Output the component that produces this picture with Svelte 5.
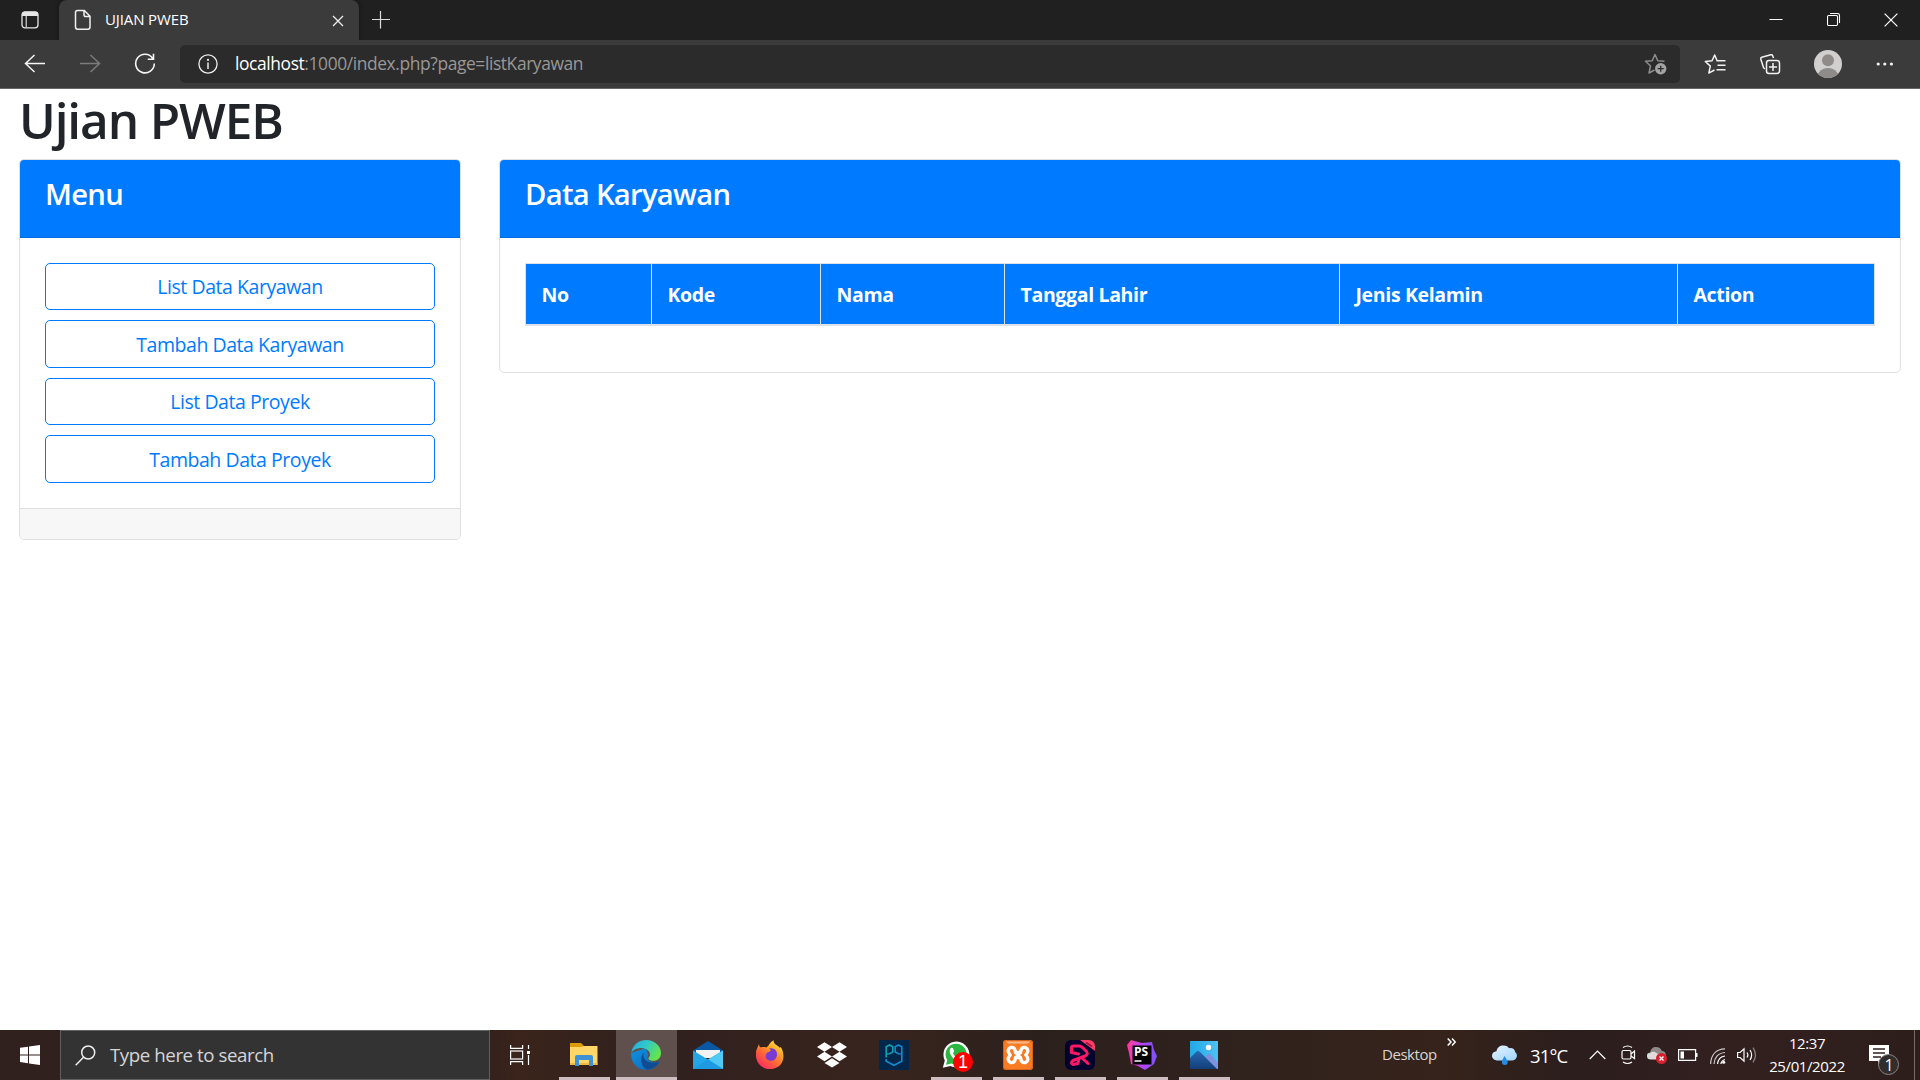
<script>
  const menu = ['List Data Karyawan', 'Tambah Data Karyawan', 'List Data Proyek', 'Tambah Data Proyek'];
  const columns = ['No', 'Kode', 'Nama', 'Tanggal Lahir', 'Jenis Kelamin', 'Action'];
</script>

<div class="screen">
  <div class="tabstrip">
    <div class="tabaction">
      <svg width="20" height="20" viewBox="0 0 20 20"><rect x="2" y="1.8" width="16" height="16" rx="3" fill="none" stroke="#e6e6e6" stroke-width="1.3" /><path d="M2 6V4.5Q2 1.8 4.7 1.8h10.6Q18 1.8 18 4.5V6z" fill="#e6e6e6" /><path d="M6.2 5v12.5" stroke="#e6e6e6" stroke-width="1.1" /></svg>
    </div>
    <div class="tab">
      <svg class="page" width="18" height="22" viewBox="0 0 18 22" fill="none" stroke="#f0f0f0" stroke-width="1.5"><path d="M3.5 1.5h6.8l5.7 5.7v10.8q0 2.2-2.2 2.2H3.7q-2.2 0-2.2-2.2V3.6q0-2.1 2-2.1zM10 1.8v3.9q0 1.8 1.8 1.8h4" /></svg>
      <span class="tabtitle">UJIAN PWEB</span>
      <svg class="tabx" width="12" height="12" viewBox="0 0 12 12" stroke="#eee" stroke-width="1.3"><path d="M1 1l10 10M11 1L1 11" /></svg>
    </div>
    <svg class="plus" width="18" height="18" viewBox="0 0 18 18" stroke="#ddd" stroke-width="1.2"><path d="M0 8.5h18M8.500 0v17.500" /></svg>
    <div class="winbtns">
      <svg width="14" height="14" viewBox="0 0 14 14"><path d="M.5 6.500h13" stroke="#fff" /></svg>
      <svg width="14" height="14" viewBox="0 0 14 14" fill="none" stroke="#fff" stroke-width="1.1"><rect x=".5" y="2.500" width="10" height="10" rx="1.2" /><path d="M3 .5h7.500q2 0 2 2v7.500" /></svg>
      <svg width="14" height="14" viewBox="0 0 14 14"><path d="M.6.6l12.800 12.800M13.400.6L.6 13.400" stroke="#fff" stroke-width="1.200" /></svg>
    </div>
  </div>

  <div class="toolbar">
    <div class="nav">
      <svg width="22" height="20" viewBox="0 0 22 20" fill="none" stroke="#f5f5f5" stroke-width="1.500"><path d="M21 9.500H1.500M10.500 1L1.500 9.500l9 8.500" /></svg>
      <svg width="22" height="20" viewBox="0 0 22 20" fill="none" stroke="#7b7b7b" stroke-width="1.500"><path d="M1 9.500h19.500M11.500 1l9 8.500-9 8.500" /></svg>
      <svg width="22" height="22" viewBox="0 0 22 22" fill="none" stroke="#f5f5f5" stroke-width="1.600"><path d="M18.800 5.500A9.300 9.300 0 1 0 20.300 10.500M19.500.700v5.600h-5.800" /></svg>
    </div>
    <div class="address">
      <svg class="info" width="20" height="20" viewBox="0 0 20 20"><circle cx="10" cy="10" r="9.100" fill="none" stroke="#eee" stroke-width="1.300" /><path d="M10 8.500v6.500" stroke="#eee" stroke-width="1.500" /><circle cx="10" cy="5.900" r="1.100" fill="#eee" /></svg>
      <span class="url"><b>localhost</b>:1000/index.php?page=listKaryawan</span>
      <svg class="fav" width="24" height="24" viewBox="0 0 24 24"><path d="M20.500 9.300l-6.700-.6L11 2.500 8.200 8.700l-6.700.6 5 4.700-1.500 7 5.500-3" fill="none" stroke="#8c8c8c" stroke-width="1.500" stroke-linejoin="round" /><circle cx="16.700" cy="16.700" r="5.700" fill="#a2a2a2" /><path d="M16.700 13.700v6M13.700 16.700h6" stroke="#2b2b2b" stroke-width="1.300" /></svg>
    </div>
    <div class="tools">
      <svg width="22" height="22" viewBox="0 0 22 22" fill="none" stroke="#f2f2f2" stroke-width="1.500" stroke-linejoin="round"><path d="M13 7.500L10.700 2 8 7.700l-6.700.8 5 4.600-1.500 7L10.500 17M12.500 7.700h9M13.500 12.200h8M12.500 16.700h9" /></svg>
      <svg width="22" height="22" viewBox="0 0 22 22" fill="none" stroke="#f2f2f2" stroke-width="1.500"><rect x="7.500" y="7.500" width="13" height="13" rx="2.500" /><path d="M14 10v8M10 14h8M14.500 5l-.8-2.300q-.5-1.300-2-.9L2.800 4.300q-1.500.5-1 2l2.700 8.200q.4 1 1.500 1.300" /></svg>
      <svg width="28" height="28" viewBox="0 0 28 28"><defs><clipPath id="avatar"><circle cx="14" cy="14" r="14" /></clipPath></defs><g clip-path="url(#avatar)"><path d="M0 0h28v28H0z" fill="#d2d0ce" /><circle cx="14" cy="10.300" r="6" fill="#8f8b88" /><ellipse cx="14" cy="25.500" rx="10" ry="7.500" fill="#8f8b88" /></g></svg>
      <svg width="18" height="6" viewBox="0 0 18 6" fill="#f2f2f2"><circle cx="2.200" cy="3" r="1.600" /><circle cx="8.800" cy="3" r="1.600" /><circle cx="15.400" cy="3" r="1.600" /></svg>
    </div>
  </div>

  <main>
    <h1><span>Ujian PWEB</span></h1>
    <div class="cards">
      <section class="card side">
        <header>Menu</header>
        <div class="buttons">
          {#each menu as item}
            <button>{item}</button>
          {/each}
        </div>
        <footer></footer>
      </section>
      <section class="card data">
        <header>Data Karyawan</header>
        <div class="table">
          {#each columns as col}
            <div class="th">{col}</div>
          {/each}
        </div>
      </section>
    </div>
  </main>

  <div class="taskbar">
    <div class="start">
      <svg width="20" height="20" viewBox="0 0 20 20" fill="#fff"><path d="M0 2.800L8 1.700v7.700H0zM9 1.500L20 0v9.400H9zM0 10.400h8v7.800L0 17.100zM9 10.400h11V20L9 18.400z" /></svg>
    </div>
    <div class="search">
      <svg width="21" height="21" viewBox="0 0 21 21" fill="none" stroke="#eee" stroke-width="1.500"><circle cx="13.200" cy="7.500" r="6.500" /><path d="M8.500 12.200L.7 20.200" /></svg>
      <span>Type here to search</span>
    </div>
    <div class="taskview">
      <svg width="21" height="20" viewBox="0 0 21 20" fill="none" stroke="#fff" stroke-width="1.200"><path d="M.6 0v3.400h12V0M.6 20v-3.400h12V20M18.500 0v4M18.500 10v10" /><rect x=".6" y="6" width="12" height="8" /><path d="M17 6h3v3h-3z" fill="#fff" stroke="none" /></svg>
    </div>
    <div class="apps">
      <div class="app open">
        <svg width="30" height="30" viewBox="0 0 30 30"><path d="M1 3h11l3 3v6H1z" fill="#dd9b08" /><path d="M1 7h11l3-1h13.500v19H1z" fill="#ffd667" /><path d="M1 23h27.500v2H1z" fill="#eeb93c" /><path d="M6 26V17q0-2 2-2h14q2 0 2 2v9h-4v-6H10v6z" fill="#3e91d4" /></svg>
      </div>
      <div class="app open active">
        <svg width="30" height="30" viewBox="0 0 30 30"><defs><linearGradient id="edgeTop" x1="0" x2="1" y1="0" y2=".5"><stop stop-color="#23a7e5" /><stop offset=".5" stop-color="#31c9c9" /><stop offset="1" stop-color="#65e34d" /></linearGradient><linearGradient id="edgeLow" x1="0" x2="1" y2="1"><stop stop-color="#1390df" /><stop offset="1" stop-color="#0869bd" /></linearGradient></defs><path d="M.2 13C-.5 22 6 30 15 30c5.500 0 10.500-3 13.200-7.500.4-.8-.3-1.300-1-.9-3.500 1.500-7.200.9-9.200-1-2-2-2-3.500-.7-5.500L15 8z" fill="url(#edgeLow)" /><path d="M.2 13C1.500 5.300 7.500 0 15 0c8.500 0 15 6.100 15 13 0 5-3.600 7.800-7.600 7.800-3.300 0-5-1.300-5-2.400 0-.9 1.600-1.500 1.600-4C19 11.300 15.500 8 10.500 8 5.500 8 1.600 10.300.2 13z" fill="url(#edgeTop)" /><path d="M13.500 12.500C9 14.500 8.500 27.500 17 29.700c4.700-.7 8.700-3.400 11.200-7.200.4-.8-.3-1.300-1-.9-6.200 2.600-13.200.4-14.700-4.600-.5-2 0-3.500 1-4.500z" fill="#104c92" /></svg>
      </div>
      <div class="app">
        <svg width="30" height="30" viewBox="0 0 30 30"><path d="M0 10.500L15 1l15 9.500V16H0z" fill="#0a57a4" /><path d="M3 10h24v8H3z" fill="#f2f2f2" /><path d="M0 10.500V29h30V10.500L15 19.500z" fill="#21a6e8" /><path d="M30 10.500V29L15 19.500z" fill="#51c9f5" /><path d="M0 29l15-9.500L30 29z" fill="#1d9be2" /></svg>
      </div>
      <div class="app">
        <svg width="30" height="30" viewBox="0 0 30 30"><defs><linearGradient id="fox" x1="1" y1="0" x2=".3" y2="1"><stop stop-color="#fff44f" /><stop offset=".45" stop-color="#ff9a20" /><stop offset="1" stop-color="#ff2462" /></linearGradient><linearGradient id="foxBottom" x1="1" y1="0" x2="0" y2="1"><stop stop-color="#ffc42e" /><stop offset=".5" stop-color="#ff6436" /><stop offset="1" stop-color="#f31d70" /></linearGradient></defs><path d="M4 4c0 2 .7 3 2 3.500 2-.7 4-.5 5 0C14 6.800 14 2.500 18.500.3c0 4.700 4.500 5 6.500 7.700l.5-1.200C31 14 29.500 29 15 29 6 29 .5 22 1 14c.2-4.500 1.300-6.500 2-7.500z" fill="url(#fox)" /><path d="M1.200 11c2-2.500 6-3.700 9.500-2.500 2.700 1 4.200 1 5.300 1.500-2 2-4.500 2-4.700 3.500-1.800 2.700-.5 7.200 4.500 7.500 4 .2 7.500-3 6.500-8 3 2 5 0 5.500-1C28 22 23 29 15 29S.5 22 1.200 11z" fill="url(#foxBottom)" opacity=".85" /><path d="M14 8.500c5-1.500 8.500 2 8 6.500-.4 4-3.300 6-6.300 5.700-4-.2-6.200-3.200-4.400-7 .5-1.500 3-1.500 4.700-3.500z" fill="#793bd1" /></svg>
      </div>
      <div class="app">
        <svg width="30" height="30" viewBox="0 0 30 30" fill="#fff"><path d="M7.500 2.200L15 7l-7.500 4.800L0 7zM22.500 2.200L30 7l-7.500 4.800L15 7zM7.500 11.800l7.500 4.700-7.500 4.800L0 16.500zM22.500 11.800l7.500 4.700-7.500 4.800-7.500-4.800zM15 18.200l7.500 4.700L15 27.600l-7.500-4.700z" /></svg>
      </div>
      <div class="app">
        <svg width="30" height="30" viewBox="0 0 30 30"><path d="M0 0h30v30H0z" fill="#03264b" /><g fill="none" stroke-width="1.600"><path d="M7.200 17.500V6.700L10.500 5l3.300 1.700V12l-3.300 1.700-3.300.3" stroke="#14a0b0" /><path d="M22.800 14l-3.300-.3-3.300-1.700V6.700L19.500 5l3.300 1.700v14.500L15 25.300l-7.800-4.100V19" stroke="#1688cf" /></g></svg>
      </div>
      <div class="app open">
        <svg width="30" height="30" viewBox="0 0 30 30"><path d="M1.800 27.800l2-7.400A13 13 0 1 1 9.300 26z" fill="#fff" /><path d="M5 24.700l1.300-4.800A10.500 10.500 0 1 1 10.300 23.500z" fill="#2cb742" /><path d="M9.400 8.500q1.200-1.500 2.400-.4l1.300 3q.2.800-1.300 2.100 1.600 3.400 5.200 4.800l1.700-2 3.500 1.700q.6 3.600-3.400 4.100C13.500 21.800 6.500 13 9.400 8.500z" fill="#fff" /></svg>
        <span class="count">1</span>
      </div>
      <div class="app open">
        <svg width="30" height="30" viewBox="0 0 30 30"><rect width="30" height="30" rx="3" fill="#fa7b22" /><path d="M3 1.500h24l-2 2H5z" fill="#fcb98a" /><rect x=".5" y=".5" width="29" height="29" rx="3" fill="none" stroke="#c9601c" stroke-width=".8" /><path d="M7.500 7.500Q12 6.500 12.500 12.500h5q.5-6 5-5 4.500 2.500.3 7.500 4.200 5-.3 7.500-4.500 1-5-5h-5q-.5 6-5 5-4.500-2.500-.3-7.500-4.200-5 .3-7.500z" fill="none" stroke="#fff" stroke-width="3.400" stroke-linejoin="round" /><path d="M12.500 15h5" stroke="#fff" stroke-width="4" /></svg>
      </div>
      <div class="app open">
        <svg width="30" height="30" viewBox="0 0 30 30"><defs><clipPath id="recClip"><rect width="30" height="30" rx="6" /></clipPath></defs><g clip-path="url(#recClip)"><path d="M0 0h30v30H0z" fill="#03022e" /><path d="M15 0h15v11z" fill="#ff3e68" /></g><path d="M21 2.500l6 4" stroke="#a41545" stroke-width="2" /><path d="M6.500 12.500V8q0-2.500 2.500-2h5q2 0 3.500 1.500l4 4q2 3-1.500 4.500L8 20.500q-3 2.500 0 4l5-1 1-5M17 18l6 5.500M6.500 12.500l7 1.500" fill="none" stroke="#ff1767" stroke-width="3" stroke-linejoin="round" stroke-linecap="round" /></svg>
      </div>
      <div class="app open">
        <svg width="30" height="30" viewBox="0 0 30 30"><defs><linearGradient id="storm"><stop stop-color="#ff3b94" /><stop offset=".5" stop-color="#b844f4" /><stop offset="1" stop-color="#7855fa" /></linearGradient></defs><path d="M4 0l11 3 10-1 2 8 3 6-3 8-9 6-7-4-7-2L2 13 0 5z" fill="url(#storm)" /><path d="M5.500 5.500h19v19h-19z" fill="#050505" /><path d="M7.500 21h7" stroke="#fff" stroke-width="1.500" /></svg>
        <span class="ps">PS</span>
      </div>
      <div class="app open">
        <svg width="28" height="28" viewBox="0 0 28 28"><defs><linearGradient id="sky" x2="1"><stop stop-color="#20a9e8" /><stop offset="1" stop-color="#4fc0f3" /></linearGradient><linearGradient id="hill" x2="0" y2="1"><stop stop-color="#2767af" /><stop offset="1" stop-color="#123f7b" /></linearGradient></defs><path d="M0 0h28v28H0z" fill="url(#sky)" /><path d="M14 18l3-4q2-2 4 0l7 8v6H14z" fill="#7d91dc" /><path d="M0 17l6-6q2-2 4 0l17 17H0z" fill="url(#hill)" /><circle cx="18.500" cy="6.500" r="2.700" fill="#fff" /></svg>
      </div>
    </div>
    <div class="tray">
      <span class="desktop">Desktop</span>
      <svg class="more" width="9" height="8" viewBox="0 0 9 8" fill="none" stroke="#fff" stroke-width="1.500"><path d="M.7.500L4 4 .7 7.500M5 .5L8.300 4 5 7.500" /></svg>
      <svg class="weather" width="25" height="20" viewBox="0 0 25 20"><defs><linearGradient id="cloud" x2="1" y2="1"><stop stop-color="#e8f6ff" /><stop offset="1" stop-color="#9fd3fc" /></linearGradient></defs><path d="M6 15.500C2 15.500 0 13 0 10.700 0 8 2 6.500 4.500 6.200 5 2.500 8 .5 11.500.5c3 0 4.700 1.300 5.500 2.700 3-.7 6 1 6.300 4 3 2 1.700 8.300-3 8.300z" fill="url(#cloud)" /><path d="M12.500 11c2 3 3.200 4.700 3.200 6a2.900 2.900 0 0 1-5.800 0c0-1.500 1-3 2.600-6z" fill="#268ce3" /></svg>
      <span class="temp">31°C</span>
      <svg class="chev" width="17" height="10" viewBox="0 0 17 10" fill="none" stroke="#fff" stroke-width="1.200"><path d="M.7 9l7.800-8 7.800 8" /></svg>
      <svg class="meet" width="15" height="20" viewBox="0 0 15 20" fill="none" stroke="#fff" stroke-width="1.200"><rect x="1" y="5.500" width="9" height="8.500" rx="1.500" /><path d="M10 9l3.500-3v7.500L10 11M2 2.500Q6.500-.5 11 2.500M2 17Q6.500 20 11 17" /></svg>
      <svg class="drive" width="21" height="20" viewBox="0 0 21 20"><path d="M4 14Q0 14 0 10.500 0 7.500 3.200 7.500C3.500 4 6 2 9 2c3 0 5 1.500 5.800 4 3 0 4 2 4 4 0 3-2 4-4 4z" fill="#8f8a89" /><path d="M4 14.500Q0 14.500 0 11 0 8 3.200 8 5 6 8 7l6 4v3.500z" fill="#dedbda" /><circle cx="14.500" cy="13.500" r="5.500" fill="#d81f30" /><path d="M12.500 11.500l4 4M16.500 11.500l-4 4" stroke="#fff" stroke-width="1.300" /></svg>
      <svg class="battery" width="20" height="12" viewBox="0 0 20 12"><path d="M.6.6h17v10.800H.6z" fill="none" stroke="#fff" stroke-width="1.200" /><path d="M18 4h1.500v4H18zM2.500 2.500H6v7H2.500z" fill="#fff" /></svg>
      <svg class="wifi" width="16" height="16" viewBox="0 0 16 16" fill="none" stroke-width="1.200"><path d="M.6 16C1 7 6 1 15 .8M4 16c.2-6 4-11 11-11.500" stroke="#d0cccb" /><path d="M7.500 16c.5-4 3-7.500 7.500-8M10.800 16c.5-2.300 2-4 4.200-4.500" stroke="#fff" /><circle cx="13.700" cy="14.300" r="1.500" fill="#fff" /></svg>
      <svg class="speaker" width="20" height="16" viewBox="0 0 20 16" fill="none" stroke="#fff" stroke-width="1.200"><path d="M.6 5.500h2.500L7 1.800v12.400L3.100 10.500H.6zM10 5.500q1.800 2.500 0 5M13 3q3.300 5 0 10" /><path d="M16 .7q5 7.300 0 14.600" stroke="#8c8583" /></svg>
      <div class="clock"><span>12:37</span><span>25/01/2022</span></div>
      <div class="notif">
        <svg width="32" height="32" viewBox="0 0 32 32"><path d="M0 0h20v16h-7l-4 4v-4H0z" fill="#fff" /><path d="M4 4h12M4 8h12M4 12h8" stroke="#2c211f" stroke-width="1.300" /><circle cx="19.500" cy="19.500" r="10" fill="#302d2c" stroke="#8b8583" /></svg>
        <span>1</span>
      </div>
      <i class="peek"></i>
    </div>
  </div>
</div>

<style>
  :global(body) { background: #fff; overflow: hidden; }
  .screen { width: 1920px; height: 1080px; display: flex; flex-direction: column; font-family: 'Open Sans', 'Noto Sans', sans-serif; color: #212529; }
  svg { display: block; flex: none; }
  span { white-space: nowrap; }

  .tabstrip { height: 40px; background: #202020; display: flex; align-items: center; flex: none; }
  .tabaction { width: 59px; padding-left: 20px; box-sizing: border-box; }
  .tab { width: 300px; height: 40px; box-sizing: border-box; padding: 0 15px 0 15px; background: #3b3b3b; border-radius: 8px 8px 0 0; display: flex; align-items: center; box-shadow: 0 0 4px #111; }
  .tabtitle { color: #fff; font-size: 15px; letter-spacing: -.12px; margin-left: 13px; line-height: 20px; padding-bottom: 2px; }
  .tabx { margin-left: auto; margin-top: 1px; }
  .plus { margin-left: 13px; }
  .winbtns { margin-left: auto; display: flex; gap: 43.500px; padding-right: 22px; }

  .toolbar { height: 49px; box-sizing: border-box; border-bottom: 1px solid #666; background: #3b3b3b; display: flex; align-items: center; flex: none; }
  .nav { width: 180px; box-sizing: border-box; padding-left: 24px; display: flex; gap: 33px; align-items: center; }
  .address { width: 1500px; height: 38px; box-sizing: border-box; border-radius: 5px; background: #2b2b2b; display: flex; align-items: center; padding: 0 12px 0 17.500px; }
  .info { margin-bottom: 1px; }
  .url { color: #989898; font-size: 17.400px; letter-spacing: -.390px; margin-left: 17.500px; padding-bottom: 2px; }
  .url b { color: #fff; font-weight: 400; }
  .fav { margin-left: auto; }
  .tools { display: flex; align-items: center; padding-left: 24px; }
  .tools svg:nth-child(2) { margin-left: 33px; }
  .tools svg:nth-child(3) { margin-left: 33px; }
  .tools svg:nth-child(4) { margin-left: 34px; }

  main { flex: 1; padding: 0 19px; }
  h1 { margin: 0; height: 70px; font-size: 49.500px; line-height: 63px; font-weight: 600; letter-spacing: -1.100px; }
  .cards { display: flex; gap: 38px; align-items: flex-start; }
  .card { box-sizing: border-box; border: 1px solid #dfdfdf; border-radius: 5px; overflow: hidden; }
  .side { width: 442px; height: 381px; }
  .data { width: 1402px; height: 214px; }
  .card header { height: 78px; box-sizing: border-box; border-bottom: 1px solid #006fe0; background: #007bff; color: #fff; font-size: 29.200px; font-weight: 600; line-height: 39px; padding: 15px 25px 0; letter-spacing: -.7px; }
  .buttons { display: grid; grid-template-rows: 47px 48px 47px 48px; gap: 10px; padding: 25px; height: 270px; box-sizing: border-box; }
  button { border: 1px solid #007bff; border-radius: 5px; background: #fff; color: #007bff; font: 400 19.500px 'Open Sans', sans-serif; letter-spacing: -.450px; padding: 1px 0 0; }
  button:nth-child(odd) { padding: 0 0 1px; }
  footer { border-top: 1px solid #dfdfdf; background: #f7f7f7; height: 31px; box-sizing: border-box; }
  .table { display: grid; grid-template-columns: 126px 169px 184px 335px 338px 197px; margin: 25px; width: 1350px; height: 63px; box-sizing: border-box; border: 1px solid #dee2e6; border-bottom-width: 2px; background: #007bff; }
  .th { color: #fff; height: 60px; box-sizing: border-box; font-size: 19.500px; font-weight: 700; line-height: 61px; padding-left: 15.500px; border-right: 1px solid #dee2e6; letter-spacing: -.340px; }
  .th:last-child { border-right: 0; }

  .taskbar { height: 50px; flex: none; display: flex; align-items: center; background: linear-gradient(90deg, #30201e 0, #2d1e1c 24%, #3a241b 27%, #30201e 34%, #38241e 46%, #2c201d 54%, #30221d 65%, #36231b 75%, #2b1e1d 82%, #32201f 90%, #2d1e1c); }
  .start { width: 60px; box-sizing: border-box; padding-left: 20px; }
  .search { width: 430px; height: 50px; box-sizing: border-box; border: 1px solid #606060; background: #333; display: flex; align-items: center; padding-left: 14px; }
  .search span { color: #d6d6d6; font-size: 18.700px; margin-left: 14px; letter-spacing: -.430px; padding-bottom: 1px; }
  .taskview { width: 64px; box-sizing: border-box; padding-left: 20px; }
  .apps { display: flex; height: 50px; }
  .app { position: relative; width: 62px; height: 50px; box-sizing: border-box; padding-right: 2px; display: flex; align-items: center; justify-content: center; }
  .app.open::after { content: ''; position: absolute; left: 5px; right: 6px; bottom: 0; height: 3px; background: #cdbdc0; }
  .app.active { background: linear-gradient(90deg, #5f504d 61px, transparent 61px); }
  .app.active::after { left: 0; right: 1px; }
  .count { position: absolute; left: 27px; top: 22px; width: 20px; height: 20px; border-radius: 50%; background: #f00; color: #fff; font: 18px/20px 'Liberation Sans', sans-serif; text-align: center; }
  .ps { position: absolute; left: 22px; top: 15px; color: #fff; font: 700 12px/13px 'Open Sans', sans-serif; }

  .tray { flex: 1; height: 50px; display: flex; align-items: center; color: #fff; padding-left: 146px; }
  .desktop { width: 65px; font-size: 15px; color: #d8d5d3; letter-spacing: -.450px; padding-bottom: 2px; }
  .more { margin-bottom: 27px; }
  .weather { margin-left: 36px; }
  .temp { width: 59px; margin-left: 13px; font-size: 18.500px; letter-spacing: -.850px; }
  .chev { margin-top: -1px; }
  .meet { margin-left: 15px; }
  .drive { margin-left: 11px; }
  .battery { margin-left: 10px; }
  .wifi { margin-left: 12px; margin-top: 2px; }
  .speaker { margin-left: 11px; }
  .clock { width: 76px; margin-left: 12px; display: flex; flex-direction: column; align-items: center; font-size: 15px; letter-spacing: -.400px; line-height: 23px; }
  .notif { position: relative; margin-left: 24px; margin-top: 12px; }
  .notif span { position: absolute; left: 10px; top: 10px; width: 20px; text-align: center; font-size: 16px; line-height: 20px; }
  .peek { margin-left: 13px; width: 1px; height: 50px; background: #746966; }
</style>
